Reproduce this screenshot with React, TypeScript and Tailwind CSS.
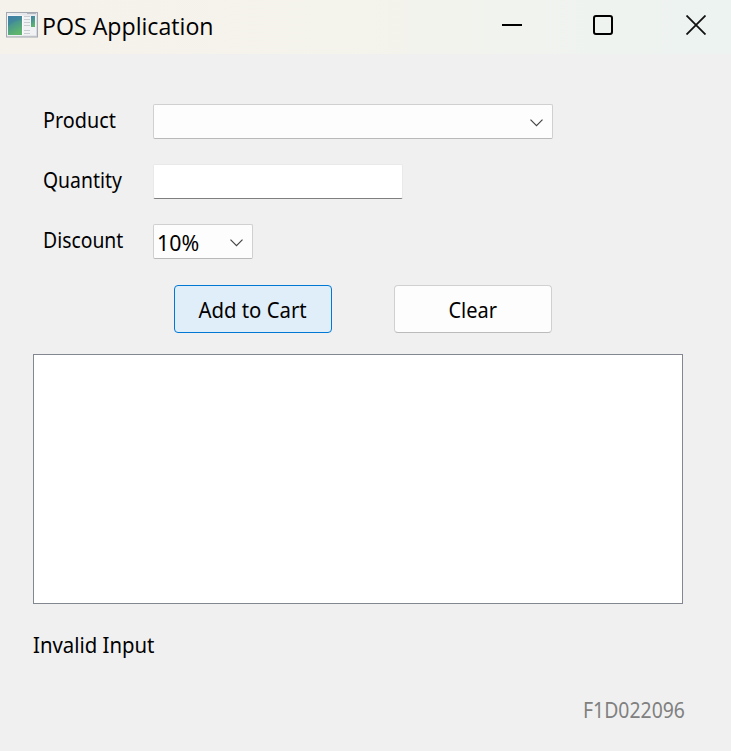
import type { ReactNode } from "react";

function Text({ children, className = "" }: { children: ReactNode; className?: string }) {
  return (
    <span className={`inline-block whitespace-nowrap text-[22px] leading-[30px] ${className}`}>
      {children}
    </span>
  );
}

function Chevron() {
  return (
    <svg width="14" height="8" viewBox="0 0 14 8" fill="none" stroke="#444" strokeWidth="1.2">
      <path d="M0.500 0.700 L6.500 6.700 L12.500 0.700" />
    </svg>
  );
}

function AppIcon() {
  return (
    <svg width="32" height="26" viewBox="0 0 32 26">
      <defs>
        <linearGradient id="pane" x1="0" y1="0" x2="0.4" y2="1">
          <stop offset="0" stopColor="#4580a8" />
          <stop offset="0.45" stopColor="#479590" />
          <stop offset="1" stopColor="#5fb56e" />
        </linearGradient>
        <linearGradient id="frame" x1="0" y1="0" x2="1" y2="1">
          <stop offset="0" stopColor="#eceef1" />
          <stop offset="1" stopColor="#d6d8dd" />
        </linearGradient>
      </defs>
      <rect x="0.5" y="0.5" width="31" height="24.5" fill="url(#frame)" stroke="#a4a8b0" />
      <path d="M21 1.5H30" stroke="#b0b4bc" />
      <rect x="1.5" y="3.5" width="15.500" height="20" fill="#fff" />
      <rect x="2" y="4" width="14" height="19" fill="url(#pane)" />
      <path d="M2 14Q8 8 16 8V4H2Z" fill="#3979a8" opacity="0.35" />
      <rect x="17" y="3.500" width="13" height="20" fill="#f1f2f4" />
      <path d="M18 4.500H24M18 7.500H24M18 10.500H24M18 13.500H24M18 18.500H24M18 21.500H24" stroke="#c9ccd1" />
      <rect x="25" y="4" width="4" height="11" fill="url(#pane)" />
    </svg>
  );
}

export default function App() {
  return (
    <div className="h-[751px] w-[731px] overflow-hidden bg-[#f0f0f0] font-['Noto_Sans',sans-serif] text-black">
      <header className="flex h-[54px] items-start bg-linear-to-r from-[#f5f2eb] via-[#f4f3ec] to-[#ecf3f1]">
        <div className="flex w-[492px] pt-3 pl-1.5">
          <AppIcon />
          <h1 className="mt-[-1px] ml-1 origin-left scale-x-[0.965] whitespace-nowrap font-['Open_Sans',sans-serif] text-[24px] leading-[30px]">
            POS Application
          </h1>
        </div>
        <div className="flex gap-[71px] pt-[15px] pl-[10px]">
          <svg width="20" height="20" viewBox="0 0 20 20" stroke="#000" strokeWidth="2"><path d="M0 10H20" /></svg>
          <svg width="20" height="20" viewBox="0 0 20 20" fill="none" stroke="#000" strokeWidth="2"><rect x="1" y="1" width="18" height="18" rx="2" /></svg>
          <svg className="ml-[2px]" width="20" height="20" viewBox="0 0 20 20" stroke="#111" strokeWidth="1.8"><path d="M0.500 0.500L19.500 19.500M19.500 0.500L0.500 19.500" /></svg>
        </div>
      </header>
      <main className="px-[33px] pt-[50px]">
        <form className="pl-[9px]" onSubmit={(e) => e.preventDefault()}>
          <div className="flex h-[60px] items-start">
            <div className="w-[111px] pl-px"><Text className="origin-left scale-x-[0.9]">Product</Text></div>
            <div className="flex h-[35px] w-[400px] items-center justify-end rounded-[2px] border border-[#d0d0d0] border-b-[#b9b9b9] bg-[#fdfdfd] pt-[2px] pr-[8px]">
              <Chevron />
            </div>
          </div>
          <div className="flex h-[60px] items-start">
            <div className="w-[111px] pl-px"><Text className="origin-left scale-x-[0.88]">Quantity</Text></div>
            <div className="h-[35px] w-[250px] rounded-[2px] border border-[#e9e9e9] border-b-[#7f7f7f] bg-white" />
          </div>
          <div className="flex h-[61px] items-start">
            <div className="w-[111px] pl-px"><Text className="origin-left scale-x-[0.88]">Discount</Text></div>
            <div className="flex h-[35px] w-[100px] items-center justify-between rounded-[2px] border border-[#d0d0d0] border-b-[#b9b9b9] bg-[#fdfdfd] pt-[2px] pr-[8px] pl-[3px]">
              <Text className="mt-[-2px] origin-left scale-x-[0.97]">10%</Text>
              <Chevron />
            </div>
          </div>
        </form>
        <div className="flex gap-[62px] pl-[141px]">
          <button className="flex h-[48px] w-[158px] items-center justify-center rounded-[4px] border border-[#0078d4] bg-[#e0eef9]">
            <Text className="scale-x-[0.925]">Add to Cart</Text>
          </button>
          <button className="flex h-[48px] w-[158px] items-center justify-center rounded-[4px] border border-[#d0d0d0] border-b-[#bbb] bg-[#fdfdfd]">
            <Text className="scale-x-[0.91]">Clear</Text>
          </button>
        </div>
        <div className="mt-[21px] h-[250px] w-[650px] border border-[#828790] bg-white" />
        <div className="mt-[25px] h-[65px]"><Text className="origin-left scale-x-[0.925]">Invalid Input</Text></div>
        <div className="pl-[550px]"><Text className="origin-left scale-x-[0.882] text-[#808080]">F1D022096</Text></div>
      </main>
    </div>
  );
}
